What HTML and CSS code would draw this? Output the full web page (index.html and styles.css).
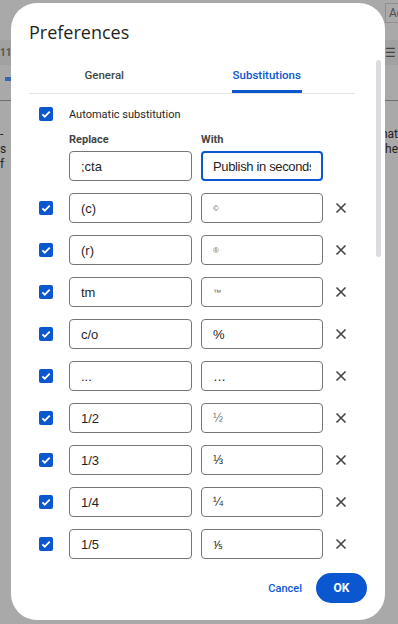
FILE: index.html
```html
<!DOCTYPE html>
<html>
<head>
	<title>Preferences</title>
	<meta http-equiv="content-type" content="text/html;charset=utf-8" />
	<link rel="stylesheet" href="styles.css">
</head>
<body>
	<div class="backdrop">
		<div class="topbar"><span class="fontbox">Ac</span></div>
		<div class="toolbar"><span class="size">11</span><span class="list">&#8285;&#9776;</span></div>
		<div class="ruler"><span class="marker"></span></div>
		<div class="doc">
			<p><span>-</span><span>nat</span></p>
			<p><span>s</span><span>the</span></p>
			<p><span>f</span><span></span></p>
		</div>
	</div>

	<div class="dialog">
		<h1 class="title">Preferences</h1>
		<div class="tabs">
			<div class="tab">General</div>
			<div class="tab active"><span>Substitutions</span></div>
		</div>

		<div class="content">
			<div class="auto">
				<span class="check"><svg width="14" height="14" viewBox="0 0 14 14"><path d="M3.4 7.3l2.4 2.4 4.9-5" fill="none" stroke="#fff" stroke-width="1.8"/></svg></span>
				<span>Automatic substitution</span>
			</div>
			<div class="labels">
				<span class="lbl">Replace</span>
				<span class="lbl">With</span>
			</div>
			<div class="rows">
				<div class="row">
					<span class="check blank"></span>
					<input class="field" type="text" value=";cta">
					<input class="field focus" type="text" value="Publish in seconds">
				</div>
				<div class="row">
					<span class="check"><svg width="14" height="14" viewBox="0 0 14 14"><path d="M3.4 7.3l2.4 2.4 4.9-5" fill="none" stroke="#fff" stroke-width="1.8"/></svg></span>
					<input class="field" type="text" value="(c)">
					<input class="field tiny" type="text" value="©">
					<span class="del"><svg width="12" height="12" viewBox="0 0 12 12"><path d="M1.5 1.5l9 9M10.5 1.5l-9 9" stroke="#444" stroke-width="1.6"/></svg></span>
				</div>
				<div class="row">
					<span class="check"><svg width="14" height="14" viewBox="0 0 14 14"><path d="M3.4 7.3l2.4 2.4 4.9-5" fill="none" stroke="#fff" stroke-width="1.8"/></svg></span>
					<input class="field" type="text" value="(r)">
					<input class="field tiny" type="text" value="®">
					<span class="del"><svg width="12" height="12" viewBox="0 0 12 12"><path d="M1.5 1.5l9 9M10.5 1.5l-9 9" stroke="#444" stroke-width="1.6"/></svg></span>
				</div>
				<div class="row">
					<span class="check"><svg width="14" height="14" viewBox="0 0 14 14"><path d="M3.4 7.3l2.4 2.4 4.9-5" fill="none" stroke="#fff" stroke-width="1.8"/></svg></span>
					<input class="field" type="text" value="tm">
					<input class="field tiny" type="text" value="™">
					<span class="del"><svg width="12" height="12" viewBox="0 0 12 12"><path d="M1.5 1.5l9 9M10.5 1.5l-9 9" stroke="#444" stroke-width="1.6"/></svg></span>
				</div>
				<div class="row">
					<span class="check"><svg width="14" height="14" viewBox="0 0 14 14"><path d="M3.4 7.3l2.4 2.4 4.9-5" fill="none" stroke="#fff" stroke-width="1.8"/></svg></span>
					<input class="field" type="text" value="c/o">
					<input class="field" type="text" value="%">
					<span class="del"><svg width="12" height="12" viewBox="0 0 12 12"><path d="M1.5 1.5l9 9M10.5 1.5l-9 9" stroke="#444" stroke-width="1.6"/></svg></span>
				</div>
				<div class="row">
					<span class="check"><svg width="14" height="14" viewBox="0 0 14 14"><path d="M3.4 7.3l2.4 2.4 4.9-5" fill="none" stroke="#fff" stroke-width="1.8"/></svg></span>
					<input class="field" type="text" value="...">
					<input class="field" type="text" value="…">
					<span class="del"><svg width="12" height="12" viewBox="0 0 12 12"><path d="M1.5 1.5l9 9M10.5 1.5l-9 9" stroke="#444" stroke-width="1.6"/></svg></span>
				</div>
				<div class="row">
					<span class="check"><svg width="14" height="14" viewBox="0 0 14 14"><path d="M3.4 7.3l2.4 2.4 4.9-5" fill="none" stroke="#fff" stroke-width="1.8"/></svg></span>
					<input class="field" type="text" value="1/2">
					<input class="field frac gray" type="text" value="½">
					<span class="del"><svg width="12" height="12" viewBox="0 0 12 12"><path d="M1.5 1.5l9 9M10.5 1.5l-9 9" stroke="#444" stroke-width="1.6"/></svg></span>
				</div>
				<div class="row">
					<span class="check"><svg width="14" height="14" viewBox="0 0 14 14"><path d="M3.4 7.3l2.4 2.4 4.9-5" fill="none" stroke="#fff" stroke-width="1.8"/></svg></span>
					<input class="field" type="text" value="1/3">
					<input class="field frac" type="text" value="⅓">
					<span class="del"><svg width="12" height="12" viewBox="0 0 12 12"><path d="M1.5 1.5l9 9M10.5 1.5l-9 9" stroke="#444" stroke-width="1.6"/></svg></span>
				</div>
				<div class="row">
					<span class="check"><svg width="14" height="14" viewBox="0 0 14 14"><path d="M3.4 7.3l2.4 2.4 4.9-5" fill="none" stroke="#fff" stroke-width="1.8"/></svg></span>
					<input class="field" type="text" value="1/4">
					<input class="field frac" type="text" value="¼">
					<span class="del"><svg width="12" height="12" viewBox="0 0 12 12"><path d="M1.5 1.5l9 9M10.5 1.5l-9 9" stroke="#444" stroke-width="1.6"/></svg></span>
				</div>
				<div class="row">
					<span class="check"><svg width="14" height="14" viewBox="0 0 14 14"><path d="M3.4 7.3l2.4 2.4 4.9-5" fill="none" stroke="#fff" stroke-width="1.8"/></svg></span>
					<input class="field" type="text" value="1/5">
					<input class="field frac" type="text" value="⅕">
					<span class="del"><svg width="12" height="12" viewBox="0 0 12 12"><path d="M1.5 1.5l9 9M10.5 1.5l-9 9" stroke="#444" stroke-width="1.6"/></svg></span>
				</div>
			</div>
		</div>

		<div class="actions">
			<button class="btn cancel">Cancel</button>
			<button class="btn ok">OK</button>
		</div>

		<div class="scroll"></div>
	</div>
</body>
</html>
```

FILE: styles.css
```css
*{padding:0;margin:0;box-sizing:border-box;}
body{background:#a9a9a9;font-family:Roboto, "Liberation Sans", sans-serif;color:#1f1f1f;overflow:hidden;height:624px;}

/* page behind the dialog */
.backdrop{height:624px;}
.topbar{height:40px;display:flex;justify-content:flex-end;padding-top:3px;}
.fontbox{width:13px;height:20px;border:1px solid #8f8f8f;border-right:0;font-size:12px;line-height:18px;color:#4e4e4e;padding-left:3px;overflow:hidden;white-space:nowrap;}
.toolbar{height:25px;background:#a1a1a1;display:flex;justify-content:space-between;align-items:center;font-size:10px;font-weight:bold;color:#555;}
.toolbar .size{border-right:1px solid #8c8c8c;padding:0 4px 0 0;line-height:20px;}
.toolbar .list{font-size:12px;font-weight:normal;color:#444;padding-right:2px;}
.ruler{height:24px;border-bottom:1px solid #6f6f6f;position:relative;}
.marker{display:block;width:7px;height:4px;background:#3a64b8;margin:12px 0 0 5px;}
.doc{padding-top:26px;font-size:12px;line-height:15px;color:#222;}
.doc p{display:flex;justify-content:space-between;}

/* dialog */
.dialog{position:absolute;left:11px;top:3px;width:374px;height:617px;background:#fff;border-radius:26px;padding:16px 0 0 18px;}
.title{font-family:"Open Sans", Roboto, sans-serif;font-weight:normal;font-size:18px;line-height:26px;color:#1f1f1f;}

.tabs{display:flex;margin:4px 37px 0 -6px;height:44px;}
.tab{flex:1;text-align:center;font-size:11.5px;font-weight:500;color:#444746;padding-top:19px;}
.tab.active{color:#0b57d0;}
.tab.active span{display:inline-block;height:25px;border-bottom:3px solid #0b57d0;padding:0 1px;}
.content{border-top:1px solid #e3e3e3;margin-right:30px;padding:13px 0 0 10px;}

.auto{display:flex;align-items:center;font-size:11px;color:#1f1f1f;height:14px;}
.check{width:14px;height:14px;border-radius:2px;background:#0b57d0;margin-right:16px;flex-shrink:0;display:block;}
.check svg{display:block;}
.check.blank{background:transparent;}

.labels{display:flex;padding:11px 0 3px 30px;font-size:11px;font-weight:bold;color:#444746;height:30px;line-height:16px;}
.lbl{width:132px;}

.rows{display:flex;flex-direction:column;gap:12px;}
.row{display:flex;align-items:center;}
.field{width:123px;height:30px;border:1px solid #747775;border-radius:4px;padding:0 11px;font-family:"Liberation Sans", Arial, sans-serif;font-size:13px;color:#1f1f1f;outline:none;background:#fff;}
.field + .field{width:122px;margin-left:9px;}
.field.focus{border:2px solid #0b57d0;padding:0 10px;letter-spacing:-0.35px;}
.field.tiny{font-size:8px;color:#666;}
.field.frac{font-size:12px;}
.field.gray{color:#777;}
.del{width:12px;height:12px;margin-left:12px;}
.del svg{display:block;}

.actions{position:absolute;right:18px;bottom:17px;display:flex;align-items:center;gap:14px;}
.btn{border:0;font-family:Roboto, "Liberation Sans", sans-serif;font-weight:500;font-size:11px;cursor:pointer;}
.cancel{background:transparent;color:#0b57d0;}
.ok{background:#0b57d0;color:#fff;width:51px;height:30px;border-radius:15px;font-size:12px;font-weight:bold;}

.scroll{position:absolute;left:365px;top:57px;width:5px;height:197px;border-radius:3px;background:#dadce0;}
```
